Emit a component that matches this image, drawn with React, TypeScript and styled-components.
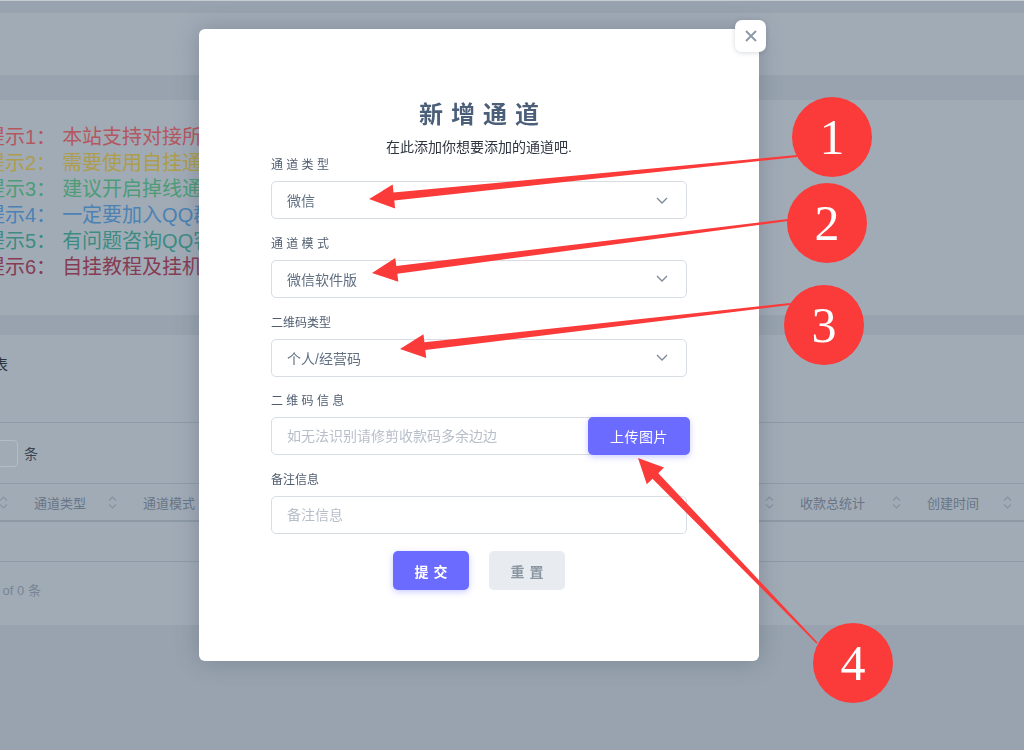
import React from "react";
import styled, { createGlobalStyle } from "styled-components";

const GlobalStyle = createGlobalStyle`
  * { box-sizing: border-box; }
  html, body { margin: 0; padding: 0; }
  body {
    background: #98a3af;
    font-family: "Liberation Sans", "Noto Sans CJK SC", sans-serif;
    overflow: hidden;
  }
`;

const hints = [
  { label: "提示1：", text: "本站支持对接所有易支付、码支付等平台", color: "#b3585f" },
  { label: "提示2：", text: "需要使用自挂通道请先下载挂机软件", color: "#ad9d4c" },
  { label: "提示3：", text: "建议开启掉线通知，以免影响收款", color: "#4c9c77" },
  { label: "提示4：", text: "一定要加入QQ群，及时获取最新通知", color: "#4b82b3" },
  { label: "提示5：", text: "有问题咨询QQ客服", color: "#3d8b82" },
  { label: "提示6：", text: "自挂教程及挂机软件下载请查看文档", color: "#873c54" },
];

const columns = [
  { title: "ID", width: 118 },
  { title: "通道类型", width: 109 },
  { title: "通道模式", width: 109 },
  { title: "通道名称", width: 110 },
  { title: "收款账号", width: 110 },
  { title: "今日收款", width: 110 },
  { title: "昨日收款", width: 109 },
  { title: "通道状态", width: 109 },
  { title: "收款总统计", width: 127 },
  { title: "创建时间", width: 111 },
  { title: "操作", width: 100 },
];

const badges = [
  { n: 1, x: 832, y: 137 },
  { n: 2, x: 827, y: 223 },
  { n: 3, x: 824, y: 325 },
  { n: 4, x: 853, y: 663 },
];

const arrows = [
  { x1: 797, y1: 156, x2: 369, y2: 199 },
  { x1: 788, y1: 220, x2: 372, y2: 273 },
  { x1: 790, y1: 304, x2: 400, y2: 349 },
  { x1: 817, y1: 643, x2: 638, y2: 458 },
];

// tapered annotation arrow, thin at the tail and wide at the head
const arrowPoints = (x1: number, y1: number, x2: number, y2: number) => {
  const len = Math.hypot(x2 - x1, y2 - y1);
  const ux = (x2 - x1) / len;
  const uy = (y2 - y1) / len;
  const nx = -uy;
  const ny = ux;
  const head = 25;
  const headHalf = 12;
  const neckHalf = 4;
  const tailHalf = 0.9;
  const bx = x2 - ux * head;
  const by = y2 - uy * head;
  const pts = [
    [x1 + nx * tailHalf, y1 + ny * tailHalf],
    [bx + nx * neckHalf, by + ny * neckHalf],
    [bx + nx * headHalf, by + ny * headHalf],
    [x2, y2],
    [bx - nx * headHalf, by - ny * headHalf],
    [bx - nx * neckHalf, by - ny * neckHalf],
    [x1 - nx * tailHalf, y1 - ny * tailHalf],
  ];
  return pts.map((p) => p.map((v) => v.toFixed(1)).join(",")).join(" ");
};

const SortIcon = () => (
  <svg width="9" height="15" viewBox="0 0 9 15" fill="none">
    <path d="M1 5.5L4.5 2L8 5.5" stroke="#8793a1" strokeWidth="1.2" />
    <path d="M1 9.5L4.5 13L8 9.5" stroke="#8793a1" strokeWidth="1.2" />
  </svg>
);

const Chevron = () => (
  <svg width="12" height="7" viewBox="0 0 12 7" fill="none">
    <path d="M1 1L6 6L11 1" stroke="#7d8898" strokeWidth="1.3" />
  </svg>
);

const App = () => {
  return (
    <>
      <GlobalStyle />
      <Page>
        <Main>
          <HeaderCard />
          <HintCard>
            {hints.map((h, i) => (
              <Hint key={i} $color={h.color}>
                <HintLabel>{h.label}</HintLabel>
                {h.text}
              </Hint>
            ))}
          </HintCard>
          <TableCard>
            <TableTitle>通道列表</TableTitle>
            <Toolbar>
              <span>显示</span>
              <PageSize>10</PageSize>
              <span>条</span>
            </Toolbar>
            <HeadRow>
              {columns.map((c) => (
                <HeadCell key={c.title} $width={c.width}>
                  <span>{c.title}</span>
                  <SortIcon />
                </HeadCell>
              ))}
            </HeadRow>
            <EmptyRow />
            <Footer>Showing 0 to 0 of 0 条</Footer>
          </TableCard>
        </Main>
      </Page>

      <Overlay>
        <Modal>
          <CloseButton>
            <svg width="12" height="12" viewBox="0 0 12 12" fill="none">
              <path d="M1 1L11 11M11 1L1 11" stroke="#8a97a6" strokeWidth="1.8" />
            </svg>
          </CloseButton>
          <Title>新增通道</Title>
          <Subtitle>在此添加你想要添加的通道吧.</Subtitle>

          <Field>
            <Label $spaced>通道类型</Label>
            <SelectBox>
              <span>微信</span>
              <Chevron />
            </SelectBox>
          </Field>
          <Field>
            <Label $spaced>通道模式</Label>
            <SelectBox>
              <span>微信软件版</span>
              <Chevron />
            </SelectBox>
          </Field>
          <Field>
            <Label>二维码类型</Label>
            <SelectBox>
              <span>个人/经营码</span>
              <Chevron />
            </SelectBox>
          </Field>
          <Field>
            <Label $spaced>二维码信息</Label>
            <InputGroup>
              <TextInput placeholder="如无法识别请修剪收款码多余边边" />
              <UploadButton>上传图片</UploadButton>
            </InputGroup>
          </Field>
          <Field>
            <Label>备注信息</Label>
            <TextInput placeholder="备注信息" />
          </Field>

          <Actions>
            <ActionButton $primary>提交</ActionButton>
            <ActionButton>重置</ActionButton>
          </Actions>
        </Modal>
      </Overlay>

      <AnnotationLayer>
        <svg width="1024" height="750" viewBox="0 0 1024 750">
          {arrows.map((a, i) => (
            <polygon key={i} points={arrowPoints(a.x1, a.y1, a.x2, a.y2)} fill="#fb3a3a" />
          ))}
        </svg>
        {badges.map((b) => (
          <Badge key={b.n} $x={b.x} $y={b.y}>
            {b.n}
          </Badge>
        ))}
      </AnnotationLayer>
    </>
  );
};

export default App;

const Page = styled.div`
  width: 1024px;
  height: 750px;
  overflow: hidden;
  border-top: 1px solid #c6cbd1;
  padding-top: 12px;
`;

const Main = styled.div`
  margin-left: -100px;
  width: calc(100% + 100px);
  display: flex;
  flex-direction: column;
`;

const HeaderCard = styled.div`
  height: 62px;
  background: #a1abb6;
`;

const HintCard = styled.div`
  margin-top: 25px;
  background: #a1abb6;
  padding: 24px 0 35px 85px;
`;

const Hint = styled.div<{ $color: string }>`
  font-size: 20px;
  line-height: 26px;
  white-space: nowrap;
  color: ${(p) => p.$color};
`;

const HintLabel = styled.span`
  margin-right: 6px;
`;

const TableCard = styled.div`
  margin-top: 20px;
  background: #a1abb6;
  display: flex;
  flex-direction: column;
`;

const TableTitle = styled.div`
  height: 88px;
  padding: 20px 0 0 48px;
  font-size: 15px;
  line-height: 20px;
  color: #2c343f;
  border-bottom: 1px solid #8f9aa7;
`;

const Toolbar = styled.div`
  height: 61px;
  display: flex;
  align-items: center;
  gap: 6px;
  padding-left: 34px;
  font-size: 14px;
  color: #3a4451;
  border-bottom: 1px solid #8f9aa7;
`;

const PageSize = styled.div`
  width: 50px;
  height: 27px;
  border: 1px solid #b4bcc6;
  border-radius: 4px;
  padding-left: 8px;
  display: flex;
  align-items: center;
  color: #3a4451;
`;

const HeadRow = styled.div`
  height: 38px;
  display: flex;
  border-bottom: 2px solid #8e99a6;
`;

const HeadCell = styled.div<{ $width: number }>`
  flex: 0 0 ${(p) => p.$width}px;
  display: flex;
  align-items: center;
  justify-content: space-between;
  padding: 0 10px 0 16px;
  font-size: 13px;
  color: #687586;
  white-space: nowrap;
`;

const EmptyRow = styled.div`
  height: 40px;
  border-bottom: 1px solid #8f9aa7;
`;

const Footer = styled.div`
  height: 63px;
  padding: 20px 0 0 13px;
  font-size: 13px;
  line-height: 18px;
  color: #778494;
  white-space: nowrap;
`;

const Overlay = styled.div`
  position: fixed;
  inset: 0;
  padding: 29px 0 0 199px;
`;

const Modal = styled.div`
  position: relative;
  width: 560px;
  background: #ffffff;
  border-radius: 6px;
  padding: 70px 72px 71px;
  box-shadow: 0 0 24px rgba(58, 70, 90, 0.3);
`;

const CloseButton = styled.div`
  position: absolute;
  top: -9px;
  right: -7px;
  width: 31px;
  height: 32px;
  border-radius: 7px;
  background: #ffffff;
  box-shadow: 0 1px 5px rgba(40, 50, 70, 0.18);
  display: flex;
  align-items: center;
  justify-content: center;
`;

const Title = styled.div`
  text-align: center;
  font-size: 24px;
  line-height: 32px;
  font-weight: 700;
  letter-spacing: 8px;
  padding-left: 8px;
  color: #4c5f78;
`;

const Subtitle = styled.div`
  margin-top: 7px;
  margin-bottom: 1px;
  text-align: center;
  font-size: 14px;
  line-height: 18px;
  color: #2e3540;
`;

const Field = styled.div`
  display: flex;
  flex-direction: column;
  gap: 8px;
  & + & {
    margin-top: 16.75px;
  }
`;

const Label = styled.div<{ $spaced?: boolean }>`
  font-size: 12px;
  line-height: 16px;
  color: #4f5d70;
  letter-spacing: ${(p) => (p.$spaced ? "3.3px" : "0")};
`;

const SelectBox = styled.div`
  height: 38px;
  border: 1px solid #d8dde3;
  border-radius: 5px;
  padding: 0 18px 0 15px;
  display: flex;
  align-items: center;
  justify-content: space-between;
  font-size: 14px;
  color: #617083;
`;

const InputGroup = styled.div`
  position: relative;
`;

const TextInput = styled.input`
  width: 100%;
  height: 38px;
  border: 1px solid #d8dde3;
  border-radius: 5px;
  padding: 0 15px;
  font-family: inherit;
  font-size: 14px;
  color: #5d6b7d;
  outline: none;
  &::placeholder {
    color: #b7bfca;
  }
`;

const UploadButton = styled.div`
  position: absolute;
  top: 0;
  right: -3px;
  width: 102px;
  height: 38px;
  border-radius: 5px;
  background: #6b6cff;
  box-shadow: 0 2px 6px rgba(107, 108, 255, 0.35);
  color: #ffffff;
  font-size: 14px;
  letter-spacing: 0.5px;
  display: flex;
  align-items: center;
  justify-content: center;
`;

const Actions = styled.div`
  margin-top: 17px;
  display: flex;
  justify-content: center;
  gap: 20px;
`;

const ActionButton = styled.div<{ $primary?: boolean }>`
  width: 76px;
  height: 39px;
  border-radius: 5px;
  display: flex;
  align-items: center;
  justify-content: center;
  font-size: 14px;
  font-weight: 600;
  letter-spacing: 5px;
  padding-left: 5px;
  background: ${(p) => (p.$primary ? "#6b6cff" : "#e8ebef")};
  color: ${(p) => (p.$primary ? "#ffffff" : "#8a95a2")};
  box-shadow: ${(p) => (p.$primary ? "0 2px 6px rgba(107, 108, 255, 0.35)" : "none")};
`;

const AnnotationLayer = styled.div`
  position: fixed;
  inset: 0;
  pointer-events: none;
  svg {
    display: block;
  }
`;

const Badge = styled.div<{ $x: number; $y: number }>`
  position: absolute;
  left: ${(p) => p.$x - 40}px;
  top: ${(p) => p.$y - 40}px;
  width: 80px;
  height: 80px;
  border-radius: 50%;
  background: #fb3a3a;
  color: #ffffff;
  font-family: "Liberation Serif", serif;
  font-size: 50px;
  display: flex;
  align-items: center;
  justify-content: center;
`;
